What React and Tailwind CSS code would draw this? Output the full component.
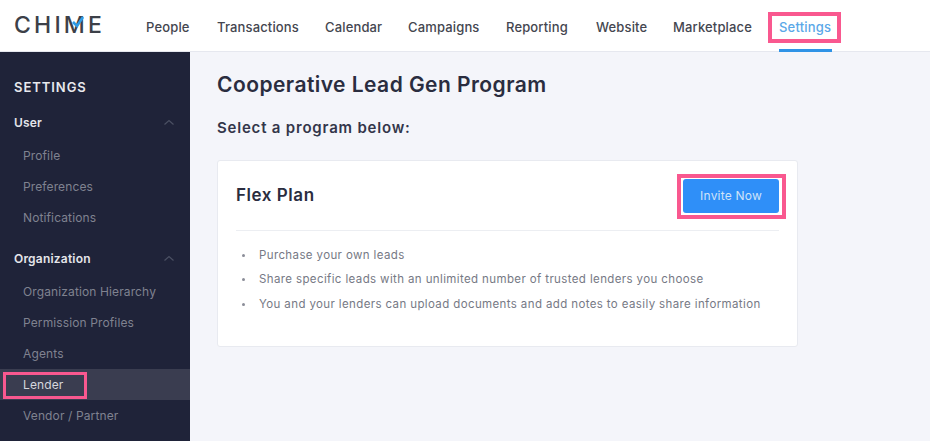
import React from "react";

const nav = [
  ["People", "w-[71px]"],
  ["Transactions", "w-[108px]"],
  ["Calendar", "w-[83px]"],
  ["Campaigns", "w-[98px]"],
  ["Reporting", "w-[90px]"],
  ["Website", "w-[77px]"],
  ["Marketplace", "w-[106px]"],
];

function Chevron() {
  return (
    <svg width="12" height="7" viewBox="0 0 12 7" fill="none" className="mr-[15px]">
      <path d="M1.5 5.5 L6 1.5 L10.5 5.5" stroke="#4b5063" strokeWidth="1.2" />
    </svg>
  );
}

function SideItem({ children }) {
  return <div className="h-[31px] pl-[23px] flex items-center text-[12px] tracking-[0.12px] text-[#7f8290]">{children}</div>;
}

function SideHead({ children }) {
  return (
    <div className="h-[31px] pl-[14px] flex items-center justify-between text-[12px] font-semibold tracking-[0.2px] text-[#e4e5ea]">
      {children}
      <Chevron />
    </div>
  );
}

export default function App() {
  return (
    <div className="w-[930px] h-[441px] overflow-hidden bg-[#f4f5fa] flex flex-col font-['Inter',sans-serif]">
      <header className="h-[52px] shrink-0 bg-white border-b border-[#e6e8ef] flex items-center">
        <div className="relative w-[146px] pl-[14px] h-full flex items-center">
          <span className="text-[23px] leading-none font-medium tracking-[3.2px] text-[#3c4048]">CHIME</span>
          <svg width="14" height="13" viewBox="0 0 14 13" fill="none" className="absolute left-[71px] top-[15px]">
            <path d="M2 7 L6 11 L12 2" stroke="#2f9be6" strokeWidth="2.6" />
          </svg>
        </div>
        {nav.map(([label, w]) => (
          <div key={label} className={`${w} pt-[4px] text-[13px] font-medium tracking-[0.15px] text-[#44464f]`}>{label}</div>
        ))}
        <div className="relative h-full pt-[4px] flex items-center text-[13px] font-medium tracking-[0.2px] text-[#5aa8e8] w-[53px] whitespace-nowrap">
          Settings
          <div className="absolute left-[-11px] top-[12px] w-[73px] h-[31px] border-[4px] border-[#f9588f]"></div>
          <div className="absolute left-0 bottom-[-1px] w-[53px] h-[3px] bg-[#2f93e6]"></div>
        </div>
      </header>
      <div className="flex flex-1 min-h-0">
        <aside className="w-[190px] shrink-0 bg-[#1f2339] pt-[25px]">
          <div className="pl-[14px] h-[22px] flex items-center text-[13px] font-semibold tracking-[0.95px] text-[#e8e9ee]">SETTINGS</div>
          <div className="mt-[8px]">
            <SideHead>User</SideHead>
            <div className="mt-[2px]">
              <SideItem>Profile</SideItem>
              <SideItem>Preferences</SideItem>
              <SideItem>Notifications</SideItem>
            </div>
          </div>
          <div className="mt-[10px]">
            <SideHead>Organization</SideHead>
            <div className="mt-[2px]">
              <SideItem>Organization Hierarchy</SideItem>
              <SideItem>Permission Profiles</SideItem>
              <SideItem>Agents</SideItem>
              <div className="relative h-[31px] pl-[23px] flex items-center text-[12px] tracking-[0.12px] text-[#d6d7de] bg-[#3a3d50]">
                Lender
                <div className="absolute left-[3px] top-[3px] w-[84px] h-[27px] border-[3px] border-[#f9588f]"></div>
              </div>
              <SideItem>Vendor / Partner</SideItem>
            </div>
          </div>
        </aside>
        <main className="flex-1 pl-[27px] pt-[20px]">
          <h1 className="text-[21px] leading-[26px] font-semibold tracking-[0.45px] text-[#2a2d3f]">Cooperative Lead Gen Program</h1>
          <h2 className="mt-[20px] text-[15px] leading-[20px] font-semibold tracking-[0.8px] text-[#33364a]">Select a program below:</h2>
          <section className="mt-[22px] w-[581px] h-[187px] bg-white border border-[#e8eaf0] rounded-[3px] px-[18px]">
            <div className="h-[70px] border-b border-[#eceef2] flex items-center justify-between">
              <div className="text-[17px] font-semibold tracking-[0.55px] text-[#2a2d3f]">Flex Plan</div>
              <div className="relative">
                <button className="block w-[96px] h-[34px] bg-[#2f8ff8] rounded-[3px] text-[12px] tracking-[0.2px] text-[#cfe3f8]">Invite Now</button>
                <div className="absolute left-[-6px] top-[-5px] w-[109px] h-[45px] border-[4px] border-[#f9588f]"></div>
              </div>
            </div>
            <ul className="pt-[12px] text-[11.5px] tracking-[0.38px] text-[#767985]">
              {[
                "Purchase your own leads",
                "Share specific leads with an unlimited number of trusted lenders you choose",
                "You and your lenders can upload documents and add notes to easily share information",
              ].map((t) => (
                <li key={t} className="h-[24.5px] flex items-center">
                  <span className="w-[3px] h-[3px] rounded-full bg-[#8b8d98] ml-[6px] mr-[14px]"></span>
                  {t}
                </li>
              ))}
            </ul>
          </section>
        </main>
      </div>
    </div>
  );
}
